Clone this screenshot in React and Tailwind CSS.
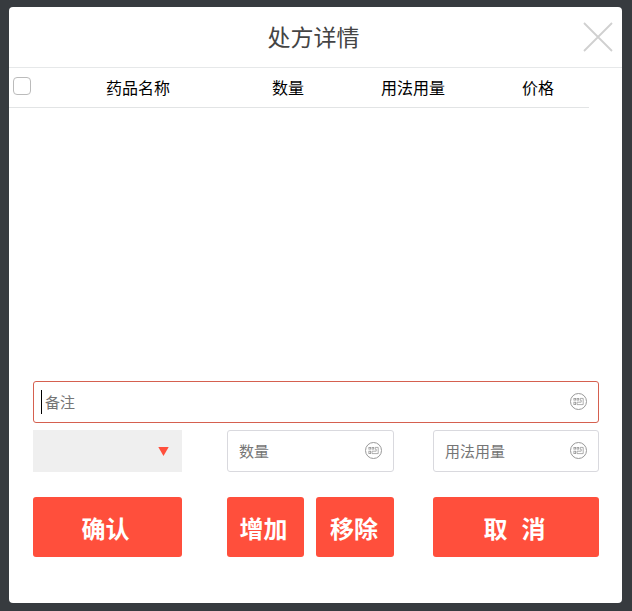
function KeyboardIcon() {
  return (
    <svg className="mb-px size-[19px] shrink-0" viewBox="0 0 19 19" fill="none" stroke="#999" aria-hidden="true">
      <circle cx="9.5" cy="9.5" r="8" stroke="#999" />
      <g strokeWidth="0.8">
        <rect x="4.9" y="6.4" width="1.7" height="1.7" />
        <rect x="8" y="6.4" width="1.7" height="1.7" />
        <path d="M11.2 6.4H14.2V12.6H8V10.2H12.2V8.2H11.2z" />
        <rect x="4.9" y="10.2" width="1.7" height="2.4" />
      </g>
    </svg>
  );
}

function Field({ label, active, className }) {
  return (
    <div
      className={`flex h-[42px] items-center justify-between rounded-[3px] border bg-white pr-[10px] ${
        active ? "border-[#d5604f] pl-[7px]" : "border-[#d9d9de] pl-[11px]"
      } ${className}`}
    >
      <div className="flex items-center">
        {active && <span className="mr-[3px] h-6 w-px bg-black" />}
        <span className="mb-[2px] text-[15px] leading-[21px] text-[#757575]">{label}</span>
      </div>
      <KeyboardIcon />
    </div>
  );
}

function ActionButton({ children, className }) {
  return (
    <button
      type="button"
      className={`h-[60px] rounded-[3px] bg-[#ff4f3c] pt-px text-center text-2xl leading-none font-bold whitespace-pre text-white ${className}`}
    >
      {children}
    </button>
  );
}

export default function App() {
  return (
    <div className="h-[611px] w-[632px] bg-[#373b3f] pt-[7px] pl-[9px] font-['Noto_Sans_CJK_SC',sans-serif]">
      <div className="flex h-[596px] w-[613px] flex-col rounded-[4px] bg-white">
        <header className="flex h-[61px] shrink-0 items-center border-b border-[#e6e8e9] pr-[9px]">
          <div className="w-[30px]" />
          <h1 className="mb-[2px] flex-1 pl-[5px] text-center text-[23px] leading-[30px] text-[#444]">处方详情</h1>
          <svg className="size-[30px]" viewBox="0 0 30 30" stroke="#d0d0d0" strokeWidth="1.8" aria-hidden="true">
            <path d="M1 1L29 29M29 1L1 29" />
          </svg>
        </header>
        <div className="grid h-10 w-[580px] shrink-0 grid-cols-[26px_206px_94px_156px_94px] items-center border-b border-[#e2e4e5] pb-[2px] text-center text-base leading-6 text-black">
          <span className="mb-px ml-1 size-[18px] rounded-[4px] border border-[#bbb] bg-white" />
          <span>药品名称</span>
          <span>数量</span>
          <span>用法用量</span>
          <span>价格</span>
        </div>
        <div className="flex-1" />
        <div className="mb-[46px] ml-6 w-[566px]">
          <Field label="备注" active className="w-full" />
          <div className="mt-[7px] flex">
            <div className="flex h-[42px] w-[149px] items-center justify-end bg-[#efefef] pr-[13px]">
              <svg className="h-[9px] w-[11px]" viewBox="0 0 11 9" fill="#ff4f3c" aria-hidden="true">
                <path d="M0.3 0H10.7L5.5 9z" />
              </svg>
            </div>
            <Field label="数量" className="ml-[45px] w-[167px]" />
            <Field label="用法用量" className="ml-[39px] w-[166px]" />
          </div>
          <div className="mt-[25px] flex">
            <ActionButton className="w-[149px] pr-1">确认</ActionButton>
            <ActionButton className="ml-[45px] w-[77px] pr-1">增加</ActionButton>
            <ActionButton className="ml-3 w-[78px] pr-[2px]">移除</ActionButton>
            <ActionButton className="ml-[39px] w-[166px] pr-[3px]">
              <span className="mr-[14px]">取</span>
              <span>消</span>
            </ActionButton>
          </div>
        </div>
      </div>
    </div>
  );
}
